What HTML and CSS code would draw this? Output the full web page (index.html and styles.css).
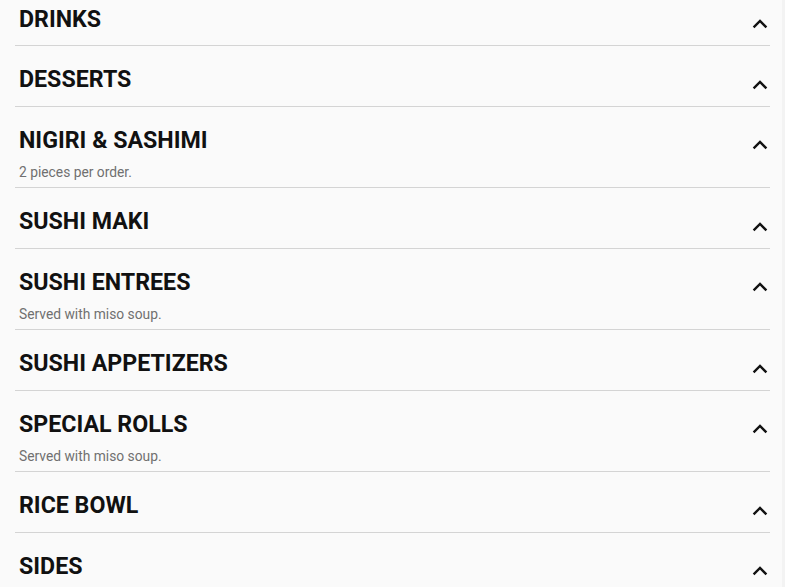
FILE: index.html
```html
<!DOCTYPE html>
<html lang="en">
<head>
<meta charset="utf-8">
<link rel="stylesheet" href="styles.css">
</head>
<body>
<div class="page">
  <div class="menu">
    <section class="cat">
      <div class="cat-head"><h2 class="cat-title">DRINKS</h2><svg class="chev" viewBox="0 0 16 10"><path d="M1.6 8.4L8 2l6.4 6.4"/></svg></div>
    </section>
    <section class="cat">
      <div class="cat-head"><h2 class="cat-title">DESSERTS</h2><svg class="chev" viewBox="0 0 16 10"><path d="M1.6 8.4L8 2l6.4 6.4"/></svg></div>
    </section>
    <section class="cat">
      <div class="cat-head"><h2 class="cat-title">NIGIRI &amp; SASHIMI</h2><svg class="chev" viewBox="0 0 16 10"><path d="M1.6 8.4L8 2l6.4 6.4"/></svg></div>
      <p class="cat-sub">2 pieces per order.</p>
    </section>
    <section class="cat">
      <div class="cat-head"><h2 class="cat-title">SUSHI MAKI</h2><svg class="chev" viewBox="0 0 16 10"><path d="M1.6 8.4L8 2l6.4 6.4"/></svg></div>
    </section>
    <section class="cat">
      <div class="cat-head"><h2 class="cat-title">SUSHI ENTREES</h2><svg class="chev" viewBox="0 0 16 10"><path d="M1.6 8.4L8 2l6.4 6.4"/></svg></div>
      <p class="cat-sub">Served with miso soup.</p>
    </section>
    <section class="cat">
      <div class="cat-head"><h2 class="cat-title">SUSHI APPETIZERS</h2><svg class="chev" viewBox="0 0 16 10"><path d="M1.6 8.4L8 2l6.4 6.4"/></svg></div>
    </section>
    <section class="cat">
      <div class="cat-head"><h2 class="cat-title">SPECIAL ROLLS</h2><svg class="chev" viewBox="0 0 16 10"><path d="M1.6 8.4L8 2l6.4 6.4"/></svg></div>
      <p class="cat-sub">Served with miso soup.</p>
    </section>
    <section class="cat">
      <div class="cat-head"><h2 class="cat-title">RICE BOWL</h2><svg class="chev" viewBox="0 0 16 10"><path d="M1.6 8.4L8 2l6.4 6.4"/></svg></div>
    </section>
    <section class="cat">
      <div class="cat-head"><h2 class="cat-title">SIDES</h2><svg class="chev" viewBox="0 0 16 10"><path d="M1.6 8.4L8 2l6.4 6.4"/></svg></div>
    </section>
  </div>
</div>
</body>
</html>
```
FILE: styles.css
```css
html, body {
  margin: 0;
  padding: 0;
  background: #f3f3f3;
  overflow: hidden;
  height: 100%;
}
.page {
  width: 782px;
  height: 100%;
  background: #fafafa;
  font-family: Roboto, "Liberation Sans", Arial, sans-serif;
  overflow: hidden;
}
.menu {
  margin: -14.5px 12px 0 15px;
  display: flex;
  flex-direction: column;
}
.cat {
  padding: 16px 0 4.5px 4px;
  border-bottom: 1px solid #d4d4d4;
}
.cat-head {
  height: 39px;
  display: flex;
  align-items: flex-start;
  justify-content: space-between;
}
.cat-title {
  margin: 0;
  font-size: 23.2px;
  line-height: 34px;
  font-weight: 700;
  color: #111111;
}
.chev {
  width: 16px;
  height: 10px;
  margin-top: 17.5px;
  margin-right: 2px;
  fill: none;
  stroke: #111111;
  stroke-width: 2.4;
}
.cat-sub {
  margin: 0;
  font-size: 13.8px;
  line-height: 21px;
  color: #707070;
}
```
